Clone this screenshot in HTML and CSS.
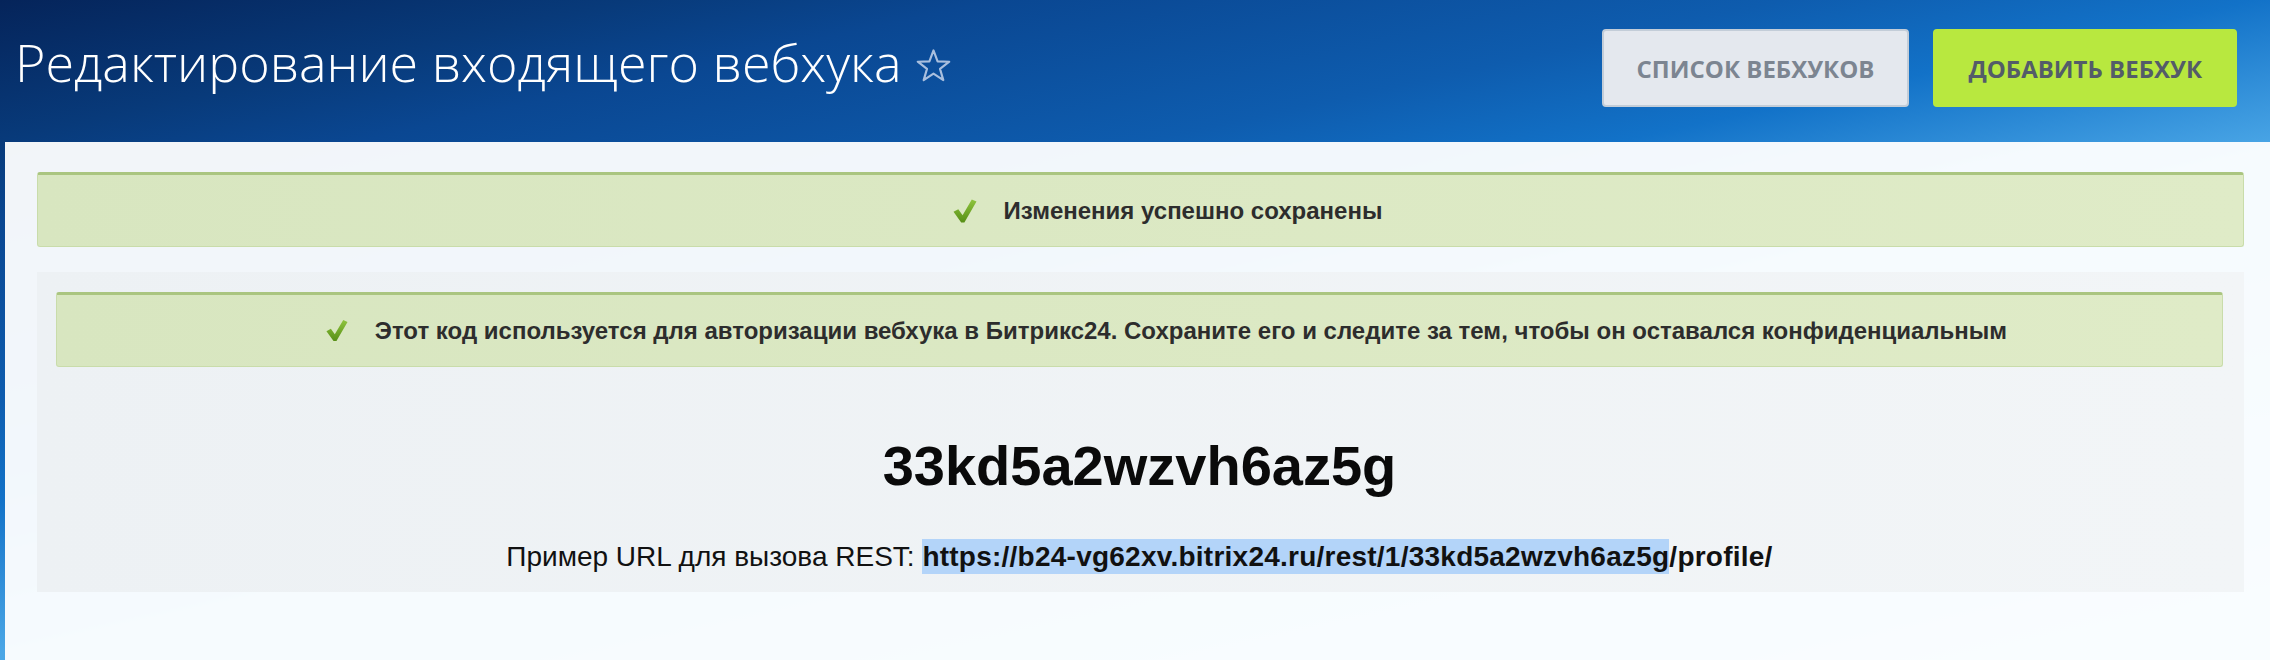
FILE: index.html
```html
<!DOCTYPE html>
<html lang="ru">
<head>
<meta charset="utf-8">
<title>Редактирование входящего вебхука</title>
<link rel="stylesheet" href="styles.css">
</head>
<body>
<header class="top">
  <h1 class="title">Редактирование входящего вебхука<svg class="star" viewBox="0 0 38 36" width="37" height="35" aria-hidden="true"><path d="M19 2.5 L23.2 13.8 L35.2 14.1 L25.7 21.5 L29.1 33 L19 26.3 L8.9 33 L12.3 21.5 L2.8 14.1 L14.8 13.8 Z" fill="none" stroke="#a9bfde" stroke-width="2.2" stroke-linejoin="round"/></svg></h1>
  <div class="actions">
    <a class="btn btn-light">Список вебхуков</a>
    <a class="btn btn-green">Добавить вебхук</a>
  </div>
</header>
<main class="work">
  <div class="alert">
    <svg class="check" viewBox="0 0 24 24" width="24" height="24" aria-hidden="true"><defs><linearGradient id="g1" x1="0" y1="0" x2="0" y2="1"><stop offset="0" stop-color="#8fc43e"/><stop offset="1" stop-color="#578f16"/></linearGradient></defs><path d="M0.5 12.8 L5.3 10.2 L9.6 16.2 L18.8 0.5 L23.5 2.6 L11.4 23.5 L8.2 23.5 Z" fill="url(#g1)"/></svg>
    <span>Изменения успешно сохранены</span>
  </div>
  <section class="panel">
    <div class="alert">
      <svg class="check" viewBox="0 0 24 24" width="22" height="23" aria-hidden="true"><defs><linearGradient id="g2" x1="0" y1="0" x2="0" y2="1"><stop offset="0" stop-color="#8fc43e"/><stop offset="1" stop-color="#578f16"/></linearGradient></defs><path d="M0.5 12.8 L5.3 10.2 L9.6 16.2 L18.8 0.5 L23.5 2.6 L11.4 23.5 L8.2 23.5 Z" fill="url(#g2)"/></svg>
      <span>Этот код используется для авторизации вебхука в Битрикс24. Сохраните его и следите за тем, чтобы он оставался конфиденциальным</span>
    </div>
    <div class="code">33kd5a2wzvh6az5g</div>
    <p class="url">Пример URL для вызова REST: <b class="link"><span class="sel">https://b24-vg62xv.bitrix24.ru/rest/1/33kd5a2wzvh6az5g</span>/profile/</b></p>
  </section>
</main>
</body>
</html>
```

FILE: styles.css
```css
html, body {
  margin: 0;
  height: 100%;
}

body {
  background: linear-gradient(167.5deg, #05245a 0%, #083a7a 12%, #0a4792 19%, #0e5cae 34%, #1272c8 43%, #4aa6e6 56%, #8fd0f5 100%);
  font-family: "Liberation Sans", Arial, sans-serif;
  overflow: hidden;
}

.top {
  height: 142px;
  box-sizing: border-box;
  display: flex;
  justify-content: space-between;
  align-items: flex-start;
  padding: 26px 33px 0 15px;
}

.title {
  margin: 0;
  font: 300 52px/72px "Open Sans", sans-serif;
  color: #fff;
  white-space: nowrap;
}

.star {
  margin-left: 14px;
  vertical-align: -1px;
}

.actions {
  display: flex;
  gap: 24px;
  margin-top: 3px;
}

.btn {
  height: 78px;
  box-sizing: border-box;
  display: flex;
  align-items: center;
  padding: 0 33px;
  font: 700 24px "Open Sans", sans-serif;
  text-transform: uppercase;
  border-radius: 4px;
  cursor: pointer;
}

.btn-light {
  background: #e4e8ee;
  border: 2px solid #c3cdd8;
  color: #7c8591;
}

.btn-green {
  background: #b8e83f;
  border: 2px solid #b8e83f;
  color: #535c69;
}

.work {
  margin-left: 5px;
  box-sizing: border-box;
  min-height: 518px;
  background: rgba(255, 255, 255, 0.95);
  padding: 30px 26px 40px 32px;
}

.alert {
  height: 75px;
  box-sizing: border-box;
  display: flex;
  justify-content: center;
  align-items: center;
  gap: 27px;
  padding-left: 54px;
  background: linear-gradient(90deg, #d8e6c0, #dfebc7);
  border: 1px solid #c9dcaa;
  border-top: 3px solid #aac580;
  border-radius: 3px;
  font-weight: 700;
  font-size: 24px;
  color: #2d2d2d;
}

.panel {
  margin-top: 25px;
  background: linear-gradient(90deg, #edf1f4, #f2f5f7);
  padding: 20px 21px 20px 19px;
}

.code {
  margin-top: 67px;
  text-align: center;
  font: 700 56px/64px "Liberation Sans", Arial, sans-serif;
  color: #0a0a0a;
}

.url {
  margin: 44px 0 0;
  text-align: center;
  font-size: 28px;
  line-height: 30px;
  color: #111;
}

.link {
  letter-spacing: 0.24px;
}

.sel {
  background: #b3d4f9;
  padding: 2px 0;
}
```
